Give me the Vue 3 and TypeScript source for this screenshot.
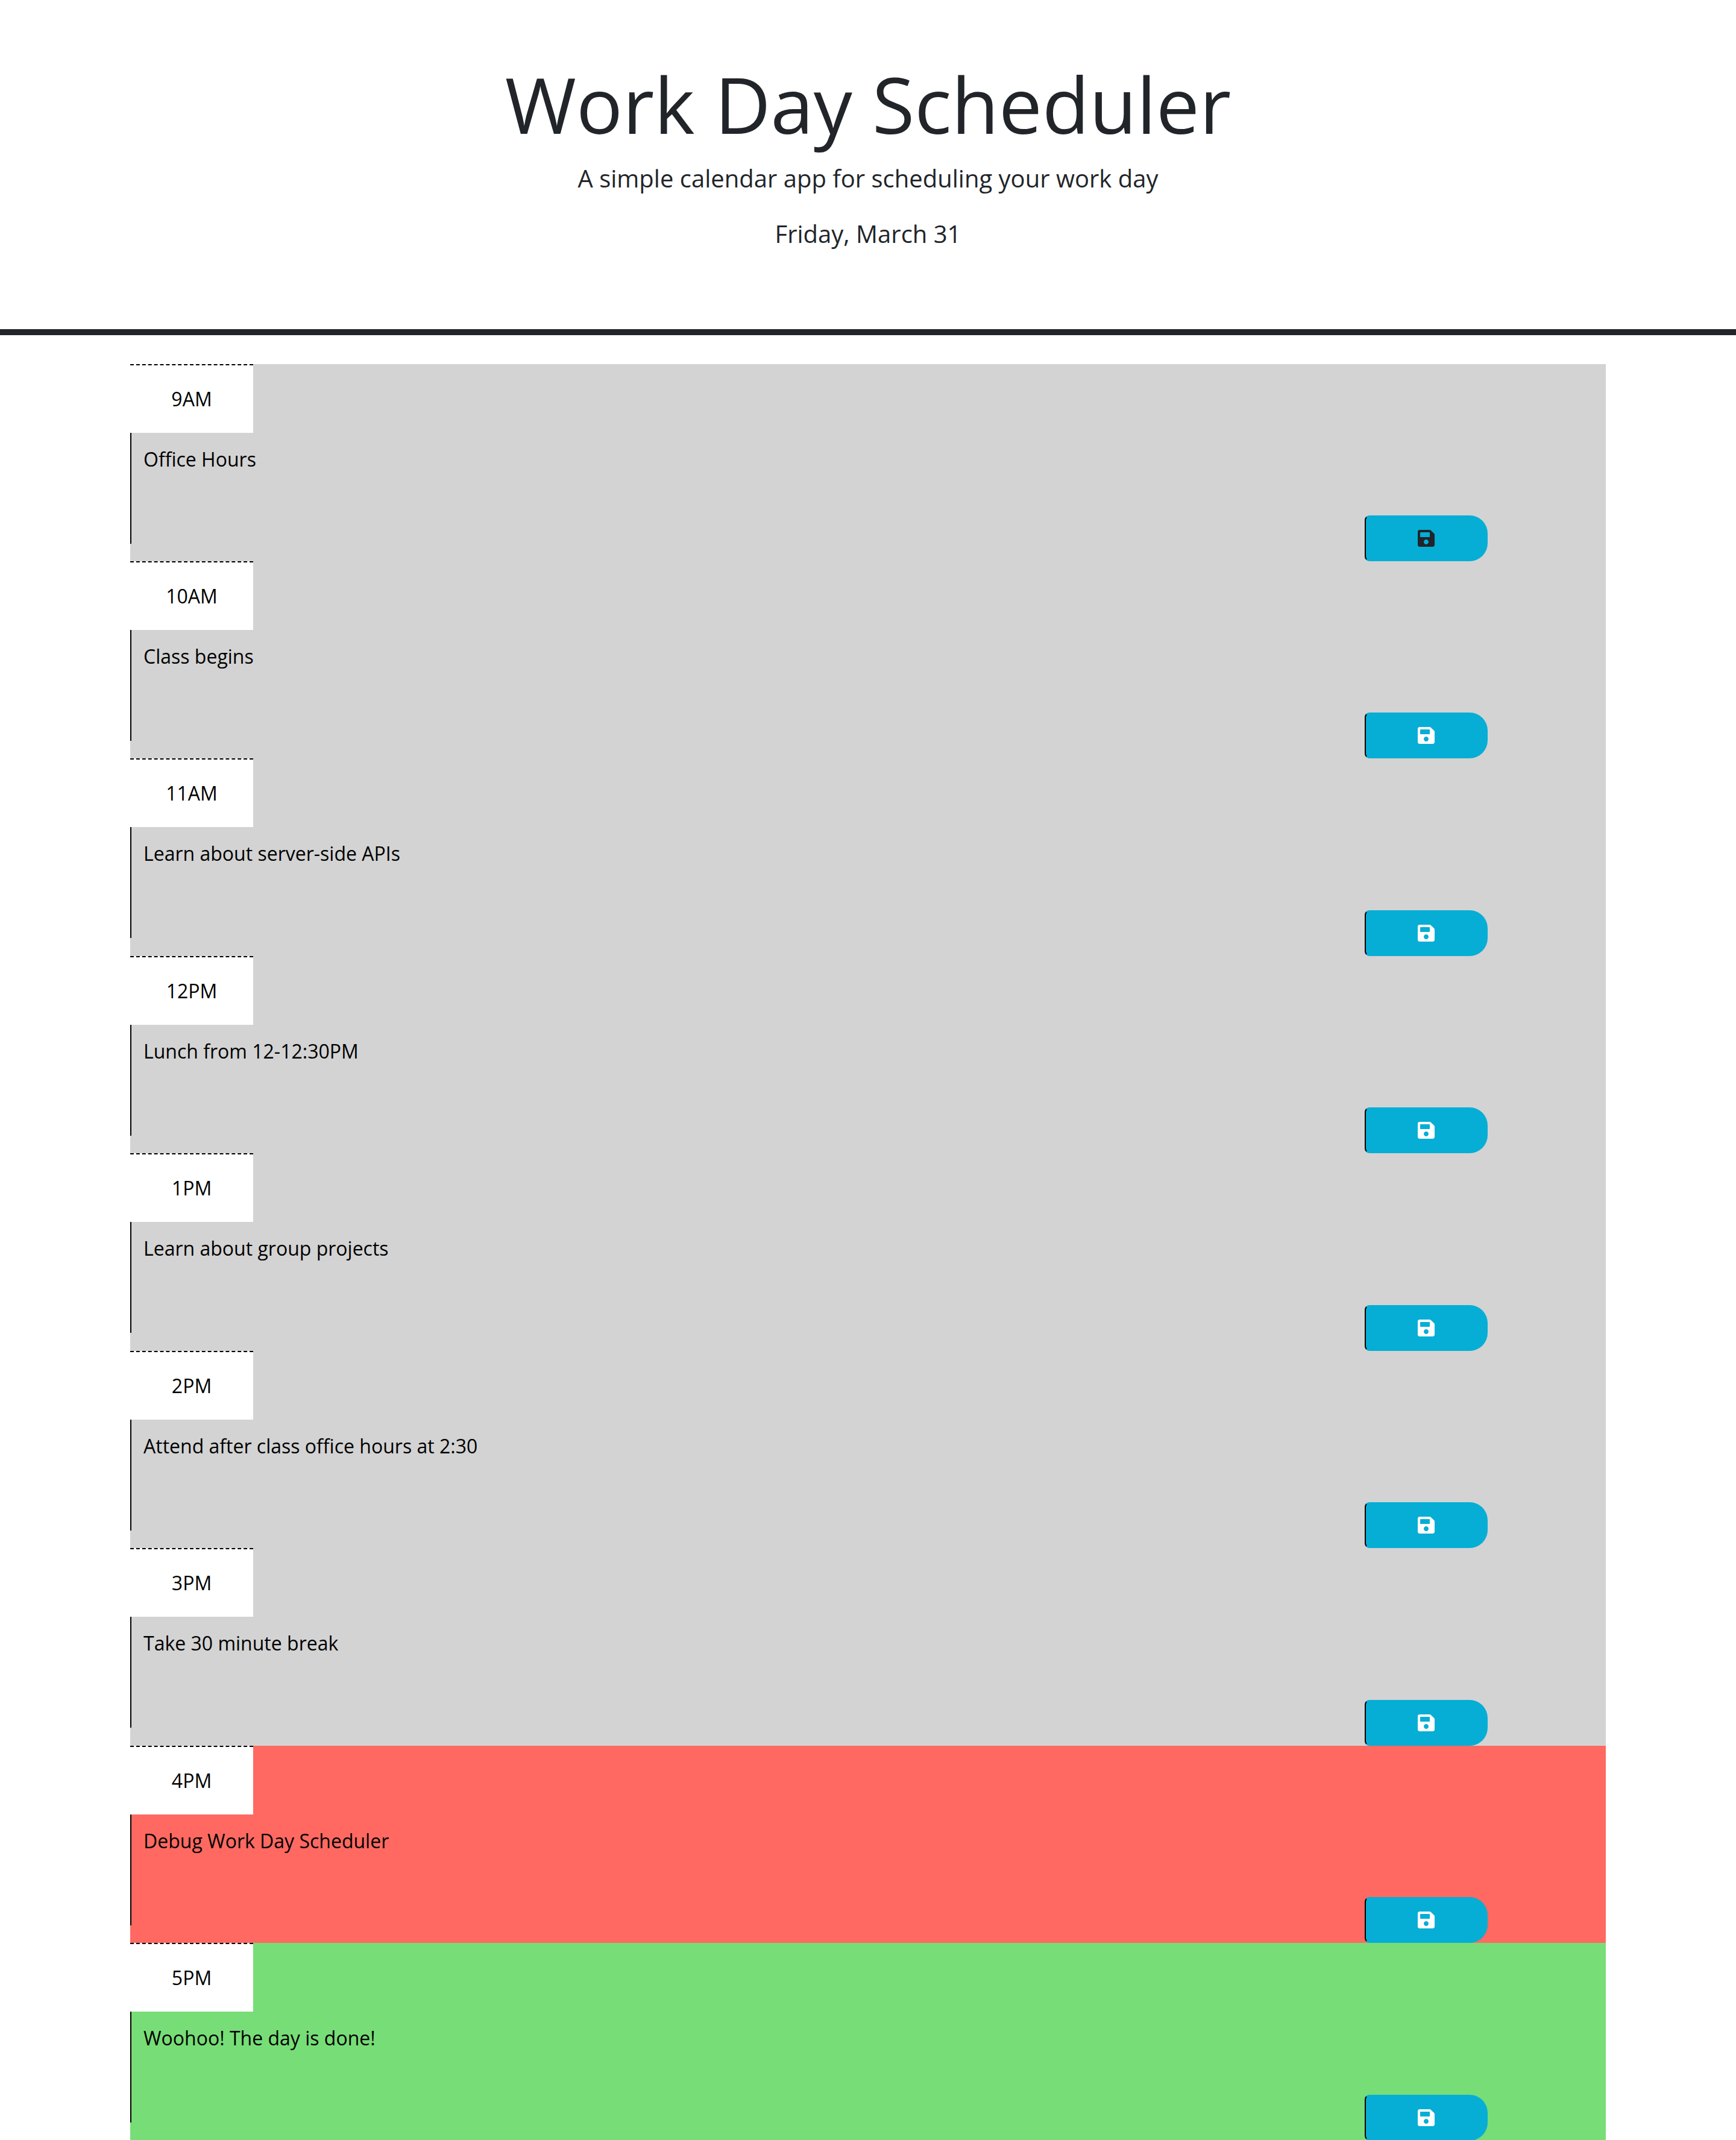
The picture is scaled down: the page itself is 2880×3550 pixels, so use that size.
<script setup lang="ts">
type Phase = 'past' | 'present' | 'future'

interface TimeBlock {
  hour: string
  task: string
  phase: Phase
  focused?: boolean
}

const today = 'Friday, March 31'

const blocks: TimeBlock[] = [
  { hour: '9AM', task: 'Office Hours', phase: 'past', focused: true },
  { hour: '10AM', task: 'Class begins', phase: 'past' },
  { hour: '11AM', task: 'Learn about server-side APIs', phase: 'past' },
  { hour: '12PM', task: 'Lunch from 12-12:30PM', phase: 'past' },
  { hour: '1PM', task: 'Learn about group projects', phase: 'past' },
  { hour: '2PM', task: 'Attend after class office hours at 2:30', phase: 'past' },
  { hour: '3PM', task: 'Take 30 minute break', phase: 'past' },
  { hour: '4PM', task: 'Debug Work Day Scheduler', phase: 'present' },
  { hour: '5PM', task: 'Woohoo! The day is done!', phase: 'future' },
]
</script>

<template>
  <div class="page">
    <header class="jumbotron">
      <h1 class="title">Work Day Scheduler</h1>
      <p class="lead">A simple calendar app for scheduling your work day</p>
      <p class="lead">{{ today }}</p>
    </header>

    <main class="schedule">
      <section v-for="block in blocks" :key="block.hour" class="time-block" :class="block.phase">
        <div class="hour">{{ block.hour }}</div>
        <div class="description">{{ block.task }}</div>
        <button class="save" :class="{ focused: block.focused }" type="button" aria-label="Save">
          <svg viewBox="0 0 448 512" aria-hidden="true">
            <path
              fill="currentColor"
              d="M433.941 129.941l-83.882-83.882A48 48 0 0 0 316.118 32H48C21.49 32 0 53.49 0 80v352c0 26.51 21.49 48 48 48h352c26.51 0 48-21.49 48-48V163.882a48 48 0 0 0-14.059-33.941zM224 416c-35.346 0-64-28.654-64-64 0-35.346 28.654-64 64-64s64 28.654 64 64c0 35.346-28.654 64-64 64zm96-304.52V212c0 6.627-5.373 12-12 12H76c-6.627 0-12-5.373-12-12V108c0-6.627 5.373-12 12-12h228.52c3.183 0 6.235 1.264 8.485 3.515l3.48 3.48A11.996 11.996 0 0 1 320 111.48z"
            />
          </svg>
        </button>
      </section>
    </main>
  </div>
</template>

<style>
body {
  margin: 0;
  background: #fff;
}
</style>

<style scoped>
.page {
  height: 3550px;
  overflow: hidden;
  font-family: 'Open Sans', sans-serif;
  font-size: 32px;
  line-height: 1.5;
  color: #212529;
  background: #fff;
}

.jumbotron {
  padding: 96px 32px;
  margin-bottom: 48px;
  border-bottom: 10px solid #212529;
  text-align: center;
}

.title {
  margin: 0 0 16px;
  font-size: 128px;
  font-weight: 400;
  line-height: 1.2;
}

.lead {
  margin: 0 0 32px;
  font-size: 40px;
}

.schedule {
  width: 85%;
  margin: 0 auto;
}

/* The description and the save button share the second row. */
.time-block {
  display: grid;
  grid-template-columns: repeat(12, 1fr);
  grid-template-rows: 114px 1fr;
  box-sizing: border-box;
  height: 327.45px;
  color: #000;
}

.past {
  background: #d3d3d3;
}

.present {
  background: #ff6961;
}

.future {
  background: #77dd77;
}

.hour {
  grid-area: 1 / 1 / 2 / 2;
  box-sizing: border-box;
  padding: 32px 0;
  border-top: 2px dashed #000;
  text-align: center;
  background: #fff;
}

.description {
  grid-area: 2 / 1 / 3 / 11;
  align-self: start;
  box-sizing: border-box;
  height: 184px;
  padding: 20px;
  border-left: 2px solid #000;
}

.save {
  grid-area: 2 / 11 / 3 / 12;
  align-self: end;
  display: flex;
  align-items: center;
  justify-content: center;
  box-sizing: border-box;
  height: 76px;
  margin: 0 -8px 0 8px;
  padding: 12px 24px;
  border: 2px solid transparent;
  border-left-color: #000;
  border-radius: 8px 30px 30px 8px;
  color: #fff;
  background: #06aed5;
}

.save.focused {
  color: #212529;
}

.save svg {
  width: 28px;
  height: 32px;
}
</style>
